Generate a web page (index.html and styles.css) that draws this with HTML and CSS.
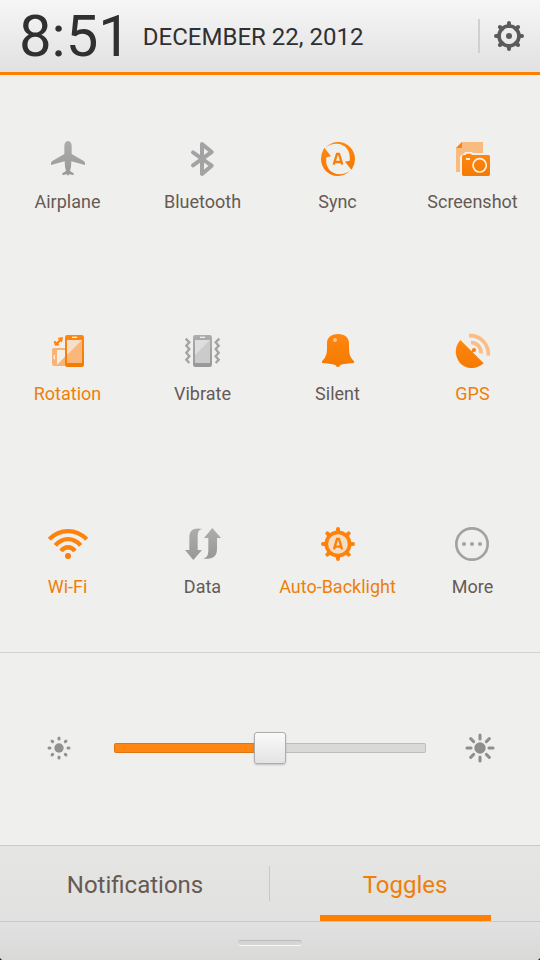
FILE: index.html
```html
<!DOCTYPE html>
<html lang="en">
<head>
<meta charset="utf-8">
<meta name="viewport" content="width=device-width, initial-scale=1">
<title>Toggles</title>
<link rel="stylesheet" href="styles.css">
</head>
<body>
<svg class="defs" aria-hidden="true">
  <defs>
    <linearGradient id="grey" x1="0" y1="0" x2="0" y2="1"><stop offset="0" stop-color="#adadad"/><stop offset="1" stop-color="#989898"/></linearGradient>
    <linearGradient id="orange" x1="0" y1="0" x2="0" y2="1"><stop offset="0" stop-color="#ff8610"/><stop offset="1" stop-color="#f57a00"/></linearGradient>
  </defs>
</svg>
<div class="panel">
  <header class="header">
    <time class="clock">8:51</time>
    <span class="date">DECEMBER 22, 2012</span>
    <button class="settings" type="button" aria-label="Settings">
      <svg viewBox="669 60 96 96" width="32" height="32" fill="none" stroke="#5b5b5b">
        <circle cx="717" cy="108" r="30" stroke-width="11"/>
        <path d="M717 78V69M717 138v9M687 108h-9M747 108h9M696 87l-6-6M738 87l6-6M696 129l-6 6M738 129l6 6" stroke-width="12" stroke-linecap="round"/>
        <circle cx="717" cy="108" r="9" fill="#5b5b5b" stroke="none"/>
      </svg>
    </button>
  </header>

  <main class="toggles">
    <button class="toggle" type="button">
      <svg class="icon" viewBox="81 33 123 108" fill="url(#grey)"><path d="M144 33C137 33 133 40 133 48V72L97 93Q93 96 93 100V105L134 94Q134 111 138 123L127 130V135L141 133L144 138L147 133L161 135V130L150 123Q154 111 154 94L195 105V100Q195 96 191 93L155 72V48C155 40 151 33 144 33Z"/></svg>
      <span>Airplane</span>
    </button>
    <button class="toggle" type="button">
      <svg class="icon" viewBox="486 33 123 108" fill="none" stroke="#a3a3a3" stroke-width="12" stroke-linecap="round" stroke-linejoin="round"><path d="M519 67L575 107L546 132V42L575 66L519 106"/></svg>
      <span>Bluetooth</span>
    </button>
    <button class="toggle" type="button">
      <svg class="icon" viewBox="81 33 123 108" fill="url(#orange)"><path d="M106 53Q123 36 144 36C173 36 195 59 195 87Q195 103 186 117L184 119L165 95L179 92C183 65 168 41 139 41Q121 41 106 53Z"/><path d="M182 121Q165 138 144 138C115 138 93 115 93 87Q93 71 101 57L103 53L123 79L109 82C105 109 120 133 149 133Q167 133 182 121Z"/><path d="M131 104L141 72H147L157 104M135 96H153" fill="none" stroke="#f98008" stroke-width="7"/></svg>
      <span>Sync</span>
    </button>
    <button class="toggle" type="button">
      <svg class="icon" viewBox="486 33 123 108"><path d="M516 36H579V69H550L545 66H526L520 72Q511 74 510 82V126H498V54Z" fill="#fabb80"/><path d="M516 36V50Q516 54 512 54H498Z" fill="#f68212"/><path d="M516 80Q516 75 521 75H526L530 71H542L546 75H595Q600 75 600 80V133Q600 138 595 138H521Q516 138 516 133Z" fill="url(#orange)"/><circle cx="569" cy="106" r="20" fill="none" stroke="#fff0df" stroke-width="5"/><rect x="528" y="84" width="12" height="6" fill="#fff0df"/></svg>
      <span>Screenshot</span>
    </button>

    <button class="toggle active" type="button">
      <svg class="icon" viewBox="81 33 123 108"><path d="M135 78H102Q96 78 96 84V126Q96 132 102 132H135Z" fill="#f9b373"/><path d="M111 84H135V104L111 128Z" fill="#f3eee9"/><path d="M103 99V112" stroke="#fff2e5" stroke-width="4"/><path d="M101 58L105 71L119 70L115 65L122 58L126 62L129 45L113 48L117 53L110 61L106 57Z" fill="#ff850c"/><rect x="135" y="39" width="57" height="96" rx="7" fill="url(#orange)"/><path d="M141 54H186V123H141Z" fill="#f9b77b"/><path d="M141 54H186L141 99Z" fill="#f6dfca"/><path d="M156 46H171" stroke="#fff2e5" stroke-width="4"/></svg>
      <span>Rotation</span>
    </button>
    <button class="toggle" type="button">
      <svg class="icon" viewBox="486 33 123 108"><rect x="519" y="39" width="57" height="96" rx="7" fill="url(#grey)"/><path d="M525 54H570V123H525Z" fill="#cbcbcb"/><path d="M525 54H570L525 99Z" fill="#dedede"/><path d="M540 46H555" stroke="#eee" stroke-width="4"/><path d="M497 50L508 61L499 71L508 81L499 92L508 103L499 113L508 123M598 50L587 61L596 71L587 81L596 92L587 103L596 113L587 123" fill="none" stroke="#a4a4a4" stroke-width="7"/></svg>
      <span>Vibrate</span>
    </button>
    <button class="toggle" type="button">
      <svg class="icon" viewBox="81 33 123 108"><path d="M144 36C165 36 177 47 177 64V79C177 101 184 110 192 118V123Q174 124 158 127L151 129Q149 135 144 135Q138 135 136 129L128 127Q113 124 96 123V118C104 110 111 101 111 79V64C111 47 123 36 144 36Z" fill="url(#orange)"/><circle cx="135" cy="54" r="6" fill="#ffc48b"/></svg>
      <span>Silent</span>
    </button>
    <button class="toggle active" type="button">
      <svg class="icon" viewBox="486 33 123 108"><path d="M511 54L581 124C557 146 524 141 507 119C492 97 495 72 511 54Z" fill="url(#orange)"/><path d="M545 90L553 84" stroke="#f98008" stroke-width="5"/><circle cx="552" cy="84" r="6" fill="#f98008"/><path d="M537 41C570 39 597 66 595 101M543 62C560 61 574 76 573 94" fill="none" stroke="#fabd86" stroke-width="11"/></svg>
      <span>GPS</span>
    </button>

    <button class="toggle active" type="button">
      <svg class="icon" viewBox="81 33 123 108" fill="none" stroke="#ff820b" stroke-width="13"><path d="M88 73C119 40 169 40 200 73M106 91C128 66 160 66 182 91M123 108C135 93 153 93 165 108"/><circle cx="144" cy="123" r="9" fill="#f98008" stroke="none"/></svg>
      <span>Wi-Fi</span>
    </button>
    <button class="toggle" type="button">
      <svg class="icon" viewBox="486 33 123 108" fill="url(#grey)"><path d="M549 42C536 42 533 52 533 66V105H546L520 135L495 105H508V67C508 46 521 36 549 42Z"/><path d="M577 39L603 69H591V103C591 124 577 136 549 130C562 130 565 119 565 103V69H552Z"/></svg>
      <span>Data</span>
    </button>
    <button class="toggle active" type="button">
      <svg class="icon" viewBox="141 33 123 108"><circle cx="204" cy="87" r="35" fill="#f4dcc5" stroke="#ff820b" stroke-width="11"/><path d="M204 50V42M204 124v8M167 87h-8M241 87h8M178 61l-6-6M230 61l6-6M178 113l-6 6M230 113l6 6" stroke="#ff820b" stroke-width="12" stroke-linecap="round"/><path d="M192 103L201 72H207L216 103M196 95H212" fill="none" stroke="#f98008" stroke-width="7"/></svg>
      <span>Auto-Backlight</span>
    </button>
    <button class="toggle" type="button">
      <svg class="icon" viewBox="546 33 123 108" fill="#a2a2a2"><circle cx="606" cy="87" r="47" fill="none" stroke="#a2a2a2" stroke-width="8"/><circle cx="582" cy="87" r="6"/><circle cx="606" cy="87" r="6"/><circle cx="630" cy="87" r="6"/></svg>
      <span>More</span>
    </button>
  </main>

  <section class="brightness">
    <svg viewBox="82 46 72 72" width="24" height="24" fill="#92918f" stroke="#92918f" stroke-width="9" stroke-linecap="round"><circle cx="118" cy="82" r="14" stroke="none"/><path d="M118 52v3M118 109v3M88 82h3M145 82h3M97 61l2 2M137 101l2 2M97 103l2-2M137 63l2-2"/></svg>
    <input class="slider" type="range" min="0" max="100" value="50" aria-label="Brightness">
    <svg viewBox="583 37 90 90" width="30" height="30" fill="#8e8e8e" stroke="#8e8e8e" stroke-width="9" stroke-linecap="round"><circle cx="628" cy="82" r="17" stroke="none"/><path d="M628 43v12M628 109v12M589 82h12M655 82h12M600 54l9 9M647 101l9 9M600 110l9-9M647 63l9-9"/></svg>
  </section>

  <nav class="tabs">
    <a class="tab" href="#notifications"><span>Notifications</span></a>
    <a class="tab selected" href="#toggles" aria-current="page"><span>Toggles</span></a>
  </nav>
  <footer class="grip"><div class="handle"></div></footer>
</div>
</body>
</html>
```
FILE: styles.css
```css
* {
  box-sizing: border-box;
}

body {
  margin: 0;
  background: #222;
  font-family: Roboto, "Liberation Sans", sans-serif;
  color: #665a54;
}

button {
  padding: 0;
  border: 0;
  background: none;
  font: inherit;
  color: inherit;
}

svg {
  display: block;
}

.defs {
  position: absolute;
  width: 0;
  height: 0;
}

.panel {
  display: flex;
  flex-direction: column;
  min-height: 100vh;
  overflow: hidden;
  border-radius: 0 0 4px 4px;
  background: #efefee;
}

.header {
  display: flex;
  align-items: center;
  height: 75px;
  padding: 0 15px 0 19px;
  border-bottom: 3px solid #ff8000;
  background: linear-gradient(#f6f6f6, #e1e1e1);
  color: #303030;
}

.clock {
  font-size: 58px;
  line-height: 72px;
}

.date {
  margin-left: 12px;
  padding-top: 2px;
  font-size: 24px;
}

.settings {
  display: flex;
  align-items: center;
  height: 34px;
  margin-left: auto;
  padding-left: 13px;
  border-left: 2px solid #d0d0d0;
}

.toggles {
  flex: 1;
  display: grid;
  grid-template-columns: repeat(4, 1fr);
  grid-template-rows: repeat(3, 1fr);
}

.toggle {
  display: flex;
  flex-direction: column;
  align-items: center;
  justify-content: center;
  gap: 14px;
  padding-top: 12px;
  font-size: 18px;
  line-height: 22px;
  white-space: nowrap;
}

.icon {
  width: 41px;
  height: 36px;
}

.active {
  color: #ee7f0a;
}

.brightness {
  display: grid;
  grid-template-columns: 110px 1fr 107px;
  align-items: center;
  justify-items: center;
  height: 193px;
  padding: 0 7px 2px 4px;
  border-top: 1px solid #d2d2d1;
}

.slider {
  appearance: none;
  width: 100%;
  height: 32px;
  margin: 0;
  background: none;
}

.slider::-webkit-slider-runnable-track {
  height: 10px;
  border: 1px solid rgba(0, 0, 0, 0.12);
  border-radius: 2px;
  background: linear-gradient(90deg, #ff8612 50%, #d9d9d9 50%) border-box;
}

.slider::-webkit-slider-thumb {
  appearance: none;
  width: 32px;
  height: 32px;
  margin-top: -12px;
  border: 1px solid #adadad;
  border-radius: 3px;
  background: linear-gradient(#fafafa, #e3e3e3);
  box-shadow: 0 1px 2px rgba(0, 0, 0, 0.2);
}

.tabs {
  display: grid;
  grid-template-columns: 1fr 1fr;
  height: 77px;
  border-top: 1px solid #cacaca;
  border-bottom: 1px solid #c8c8c8;
  background: linear-gradient(#e5e5e3, #e1e1e1);
}

.tab {
  display: flex;
  justify-content: center;
  color: inherit;
  font-size: 24px;
  line-height: 78px;
  text-decoration: none;
}

.tab:first-child {
  background: linear-gradient(#c8c8c8, #c8c8c8) right 20px / 1px 35px no-repeat;
}

.selected {
  color: #ee7f0a;
}

.selected span {
  width: 171px;
  height: 75px;
  border-bottom: 6px solid #ff8000;
  text-align: center;
}

.grip {
  display: flex;
  justify-content: center;
  height: 38px;
  padding-top: 18px;
  background: linear-gradient(#e1e1e1, #d9d9d8);
}

.handle {
  width: 64px;
  height: 6px;
  border-top: 1px solid #bababa;
  border-bottom: 1px solid #f8f8f8;
  border-radius: 3px;
  background: #d5d5d4;
}
```
